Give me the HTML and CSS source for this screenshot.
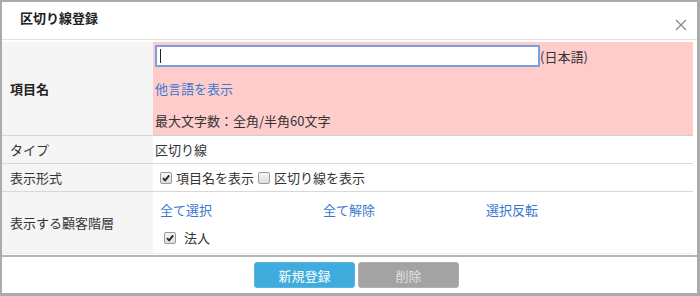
FILE: index.html
```html
<!DOCTYPE html>
<html lang="ja">
<head>
<meta charset="utf-8">
<link rel="stylesheet" href="styles.css">
</head>
<body>
<div class="dialog">
  <div class="header">
    <div class="title">区切り線登録</div>
    <svg class="close" width="12" height="12" viewBox="0 0 12 12"><path d="M1 1L11 11M11 1L1 11" stroke="#8a8a8a" stroke-width="1.3" fill="none"/></svg>
  </div>
  <div class="form">
    <div class="label r1 strong">項目名</div>
    <div class="value r1 pink">
      <div class="input-line"><span class="input"><span class="caret"></span></span><span>(日本語)</span></div>
      <a class="link lang">他言語を表示</a>
      <div class="limit">最大文字数：全角/半角60文字</div>
    </div>
    <div class="label r2">タイプ</div>
    <div class="value r2">区切り線</div>
    <div class="label r2">表示形式</div>
    <div class="value r2 checks">
      <span class="cb checked"><svg width="10" height="10" viewBox="0 0 10 10"><path d="M2 5.2L4.1 7.4L8.2 2.4" stroke="#2a2a2a" stroke-width="1.9" fill="none"/></svg></span><span class="cbl">項目名を表示</span>
      <span class="cb"></span><span class="cbl">区切り線を表示</span>
    </div>
    <div class="label r4">表示する顧客階層</div>
    <div class="value r4 tiers">
      <div class="links"><a class="link col">全て選択</a><a class="link col">全て解除</a><a class="link col">選択反転</a></div>
      <div class="tier"><span class="cb checked"><svg width="10" height="10" viewBox="0 0 10 10"><path d="M2 5.2L4.1 7.4L8.2 2.4" stroke="#2a2a2a" stroke-width="1.9" fill="none"/></svg></span><span class="cbl wide">法人</span></div>
    </div>
  </div>
  <div class="footer">
    <button class="btn primary">新規登録</button>
    <button class="btn grey">削除</button>
  </div>
</div>
</body>
</html>
```
FILE: styles.css
```css
* { box-sizing: border-box; }
html, body { margin: 0; padding: 0; background: #fff; }
body {
  font-family: "Noto Sans CJK JP", "Noto Sans", sans-serif;
  font-size: 13px;
  color: #333;
}
.dialog {
  width: 700px;
  height: 296px;
  border-style: solid;
  border-color: #ababab;
  border-width: 2px 3px 3px 2px;
  display: flex;
  flex-direction: column;
}
.header {
  height: 38px;
  border-bottom: 1px solid #e3e3e3;
  display: flex;
  align-items: center;
  justify-content: space-between;
  padding: 0 10px 0 18px;
  flex: none;
}
.title { font-weight: bold; color: #222; font-size: 13px; margin-top: -6px; }
.close { margin-top: 9px; }
.form {
  margin: 2px 4px 0 0;
  display: grid;
  grid-template-columns: 151px 1fr;
  flex: none;
}
.label {
  background: #f5f5f5;
  border-bottom: 1px solid #d8d8d8;
  display: flex;
  align-items: center;
  padding-left: 8px;
}
.strong { font-weight: bold; color: #222; }
.value {
  border-bottom: 1px solid #d8d8d8;
  padding-left: 2px;
  display: flex;
  align-items: center;
}
.r1 { height: 94px; }
.r2 { height: 28px; }
.r4 { height: 62px; border-bottom-color: #ececec; }
.pink {
  background: #ffcccc;
  flex-direction: column;
  align-items: flex-start;
  padding-top: 3px;
  border-bottom-color: #d0d0d0;
}
.input-line { display: flex; align-items: center; height: 22px; }
.input {
  width: 385px;
  height: 22px;
  background: #fff;
  border: 2px solid #7a9fe0;
  border-radius: 1px;
  display: flex;
  align-items: center;
  padding-left: 3px;
}
.caret { width: 1px; height: 14px; background: #222; }
.link { color: #3a78d0; text-decoration: none; }
.lang { margin-top: 12px; line-height: 20px; }
.limit { margin-top: 12px; line-height: 20px; }
.checks { padding-left: 7px; }
.cb {
  width: 12px;
  height: 12px;
  border: 1px solid #9a9a9a;
  border-radius: 2px;
  background: linear-gradient(#f6f6f6, #dedede);
  display: inline-flex;
  align-items: center;
  justify-content: center;
  flex: none;
}
.cbl { margin-left: 4px; margin-right: 4px; }
.cbl.wide { margin-left: 8px; }
.tiers {
  flex-direction: column;
  align-items: flex-start;
  justify-content: flex-start;
  padding-left: 7px;
  padding-top: 8px;
}
.links { display: flex; line-height: 20px; }
.col { width: 163px; }
.tier { display: flex; align-items: center; margin-top: 8px; padding-left: 4px; line-height: 20px; }
.footer {
  margin-top: 1px;
  border-top: 2px solid #b6b6b6;
  flex: 1;
  display: flex;
  justify-content: center;
  align-items: flex-start;
  padding: 5px 0 0 14px;
  gap: 3px;
}
.btn {
  width: 101px;
  height: 26px;
  border: 1px solid transparent;
  border-radius: 3px;
  font-family: inherit;
  font-size: 13px;
  padding: 0;
}
.primary { background: #3eaddd; color: #fff; border-color: #57b5df; }
.grey { background: #a3a3a3; color: #e0e0e0; border-color: #b0b0b0; }
```
